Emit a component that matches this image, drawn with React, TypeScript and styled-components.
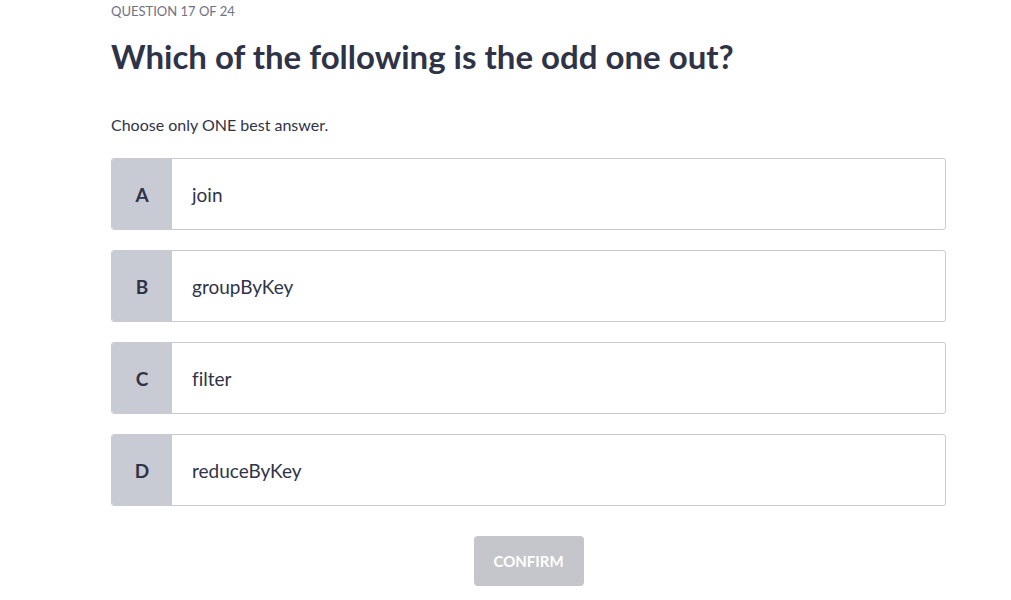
import React from "react";
import styled, { createGlobalStyle } from "styled-components";

const Global = createGlobalStyle`
  html, body { margin: 0; padding: 0; background: #ffffff; }
  body {
    font-family: "Lato", "Noto Sans", sans-serif;
    color: #2f3347;
    font-variant-ligatures: none;
  }
`;

const Page = styled.div`
  width: 835px;
  margin-left: 111px;
  display: flex;
  flex-direction: column;
`;

const Eyebrow = styled.div`
  margin-top: 2px;
  font-size: 13px;
  line-height: 18px;
  color: #6e7282;
`;

const Title = styled.h1`
  margin: 16px 0 0;
  font-size: 33px;
  line-height: 40px;
  font-weight: 700;
  color: #2f3347;
`;

const Hint = styled.p`
  margin: 39px 0 0;
  font-size: 16px;
  line-height: 20px;
  color: #2f3347;
`;

const Options = styled.div`
  margin-top: 23px;
  display: flex;
  flex-direction: column;
  gap: 20px;
`;

const Option = styled.div`
  display: flex;
  height: 72px;
  box-sizing: border-box;
  border: 1px solid #c9cad3;
  border-radius: 3px;
  overflow: hidden;
  background: #fff;
`;

const Letter = styled.div`
  width: 60px;
  flex: none;
  background: #c9cbd4;
  display: flex;
  align-items: center;
  justify-content: center;
  font-size: 19px;
  font-weight: 700;
  color: #2f3347;
`;

const Text = styled.div`
  display: flex;
  align-items: center;
  padding-left: 20px;
  font-size: 19px;
  color: #2f3347;
`;

const Footer = styled.div`
  display: flex;
  justify-content: center;
  margin-top: 30px;
`;

const Confirm = styled.button`
  width: 110px;
  height: 50px;
  border: none;
  border-radius: 4px;
  background: #c5c6cb;
  color: #ffffff;
  font-family: inherit;
  font-size: 15px;
  font-weight: 700;
`;

const options = [
  ["A", "join"],
  ["B", "groupByKey"],
  ["C", "filter"],
  ["D", "reduceByKey"],
];

export default function App() {
  return (
    <>
      <Global />
      <Page>
        <Eyebrow>QUESTION 17 OF 24</Eyebrow>
        <Title>Which of the following is the odd one out?</Title>
        <Hint>Choose only ONE best answer.</Hint>
        <Options>
          {options.map(([l, t]) => (
            <Option key={l}>
              <Letter>{l}</Letter>
              <Text>{t}</Text>
            </Option>
          ))}
        </Options>
        <Footer>
          <Confirm>CONFIRM</Confirm>
        </Footer>
      </Page>
    </>
  );
}
